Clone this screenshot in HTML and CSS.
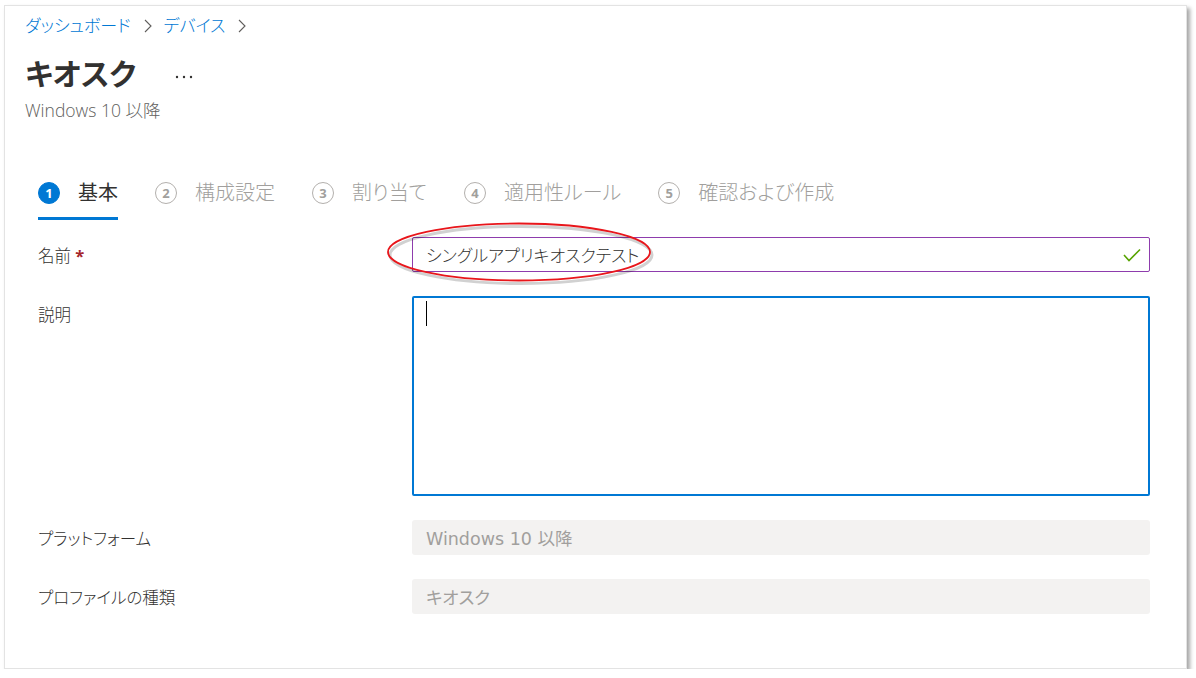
FILE: index.html
```html
<!DOCTYPE html>
<html lang="ja">
<head>
<meta charset="utf-8"/>
<meta content="width=device-width, initial-scale=1.0" name="viewport"/>
<title>キオスク - デバイス</title>
<link rel="stylesheet" href="styles.css">
</head>
<body>
<div class="panel">
<!-- Cabecera -->
<div class="breadcrumb">
  <a href="#">ダッシュボード</a>
  <svg class="chevron" width="8" height="14" viewBox="0 0 8 14"><polyline points="1,1 7,7 1,13" fill="none" stroke="#605e5c" stroke-width="1.1"/></svg>
  <a href="#">デバイス</a>
  <svg class="chevron" width="8" height="14" viewBox="0 0 8 14"><polyline points="1,1 7,7 1,13" fill="none" stroke="#605e5c" stroke-width="1.1"/></svg>
</div>
<div class="title-row">
  <h1>キオスク</h1>
  <svg class="more" width="18" height="4" viewBox="0 0 18 4"><circle cx="2" cy="2" r="1.2" fill="#323130"/><circle cx="9" cy="2" r="1.2" fill="#323130"/><circle cx="16" cy="2" r="1.2" fill="#323130"/></svg>
</div>
<p class="subtitle">Windows 10 以降</p>

<!-- Pasos -->
<div class="tabs">
  <div class="tab active"><span class="step">1</span><span class="tab-label">基本</span></div>
  <div class="tab"><span class="step">2</span><span class="tab-label">構成設定</span></div>
  <div class="tab"><span class="step">3</span><span class="tab-label">割り当て</span></div>
  <div class="tab"><span class="step">4</span><span class="tab-label">適用性ルール</span></div>
  <div class="tab"><span class="step">5</span><span class="tab-label">確認および作成</span></div>
</div>

<!-- Formulario -->
<div class="form">
  <div class="row">
    <label class="label">名前 <span class="req">*</span></label>
    <div class="field field-ok">
      <span class="value">シングルアプリキオスクテスト</span>
      <svg class="check" width="18" height="14" viewBox="0 0 18 14"><polyline points="1,7 6,12.5 17,1.5" fill="none" stroke="#57a300" stroke-width="1.6"/></svg>
    </div>
    <svg class="mark" width="274" height="66" viewBox="0 0 274 66">
      <ellipse cx="135" cy="31" rx="131" ry="28.5" fill="none" stroke="#000" stroke-opacity="0.18" stroke-width="3" transform="translate(2,3)"/>
      <ellipse cx="135" cy="31" rx="131" ry="28.5" fill="none" stroke="#e8161b" stroke-width="1.8"/>
    </svg>
  </div>
  <div class="row">
    <label class="label">説明</label>
    <div class="field textarea"><span class="caret"></span></div>
  </div>
  <div class="row">
    <label class="label">プラットフォーム</label>
    <div class="field disabled">Windows 10 以降</div>
  </div>
  <div class="row">
    <label class="label">プロファイルの種類</label>
    <div class="field disabled">キオスク</div>
  </div>
</div>
</div>
</body>
</html>
```
FILE: styles.css
```css
:root {
  --azul: #0078d4;
  --texto: #323130;
  --gris: #a19f9d;
  --fondo-campo: #f3f2f1;
}

* {
  box-sizing: border-box;
  font-family: "Open Sans", "Noto Sans CJK JP", sans-serif;
  font-feature-settings: "palt";
}

body {
  margin: 0;
  background: #fff;
  color: var(--texto);
}

.panel {
  width: 1183px;
  height: 664px;
  margin: 5px 0 0 4px;
  padding: 9px 0 0 20px;
  border: 1px solid #e3e3e3;
  background: #fff;
  box-shadow: 3px 3px 4px rgba(0,0,0,0.35);
}

.breadcrumb {
  font-size: 17px;
  line-height: 22px;
  display: flex;
  align-items: center;
  font-weight: 300;
}

.breadcrumb a {
  color: var(--azul);
  text-decoration: none;
}

.chevron {
  margin: 0 12px 0 13px;
}

.title-row {
  display: flex;
  align-items: center;
  margin-top: 19px;
  height: 36px;
}

h1 {
  margin: 0;
  font-size: 30px;
  font-weight: 700;
  line-height: 36px;
}

.more {
  margin-left: 39px;
  margin-top: 5px;
}

.subtitle {
  margin: 8px 0 0;
  font-size: 17.5px;
  line-height: 20px;
  color: #605e5c;
  font-weight: 300;
}

.tabs {
  display: flex;
  margin: 60px 0 0 13px;
  gap: 37px;
}

.tab {
  display: flex;
  align-items: center;
  height: 40px;
  padding-bottom: 11px;
  border-bottom: 3px solid transparent;
  color: var(--gris);
  font-size: 20px;
}

.tab-label {
  line-height: 26px;
  font-weight: 300;
}

.tab.active .tab-label {
  font-weight: 400;
}

.step {
  width: 22px;
  height: 22px;
  border-radius: 50%;
  border: 1.5px solid #b3b0ad;
  display: flex;
  align-items: center;
  justify-content: center;
  font-size: 13px;
  font-weight: 700;
  margin-right: 18px;
}

.tab.active {
  color: var(--texto);
  border-bottom-color: var(--azul);
}

.tab.active .step {
  background: var(--azul);
  border-color: var(--azul);
  color: #fff;
}

.form {
  margin: 17px 0 0 13px;
  width: 1112px;
  display: flex;
  flex-direction: column;
  gap: 24px;
}

.row {
  display: grid;
  grid-template-columns: 374px 1fr;
  position: relative;
}

.label {
  font-size: 16.5px;
  line-height: 37px;
  height: 35px;
  font-weight: 300;
}

.req {
  color: #a4262c;
  font-weight: 700;
}

.field {
  height: 35px;
  border-radius: 2px;
  padding: 0 14px;
  display: flex;
  align-items: center;
  font-size: 17px;
  font-weight: 300;
}

.field-ok {
  border: 1px solid #8e3cad;
  justify-content: space-between;
  padding-left: 13px;
}

.check {
  margin-right: -6px;
}

.textarea {
  height: 200px;
  border: 2px solid var(--azul);
  align-items: flex-start;
  padding-top: 3px;
  padding-left: 12px;
}

.caret {
  width: 1px;
  height: 25px;
  background: #000;
}

.disabled {
  background: var(--fondo-campo);
  color: var(--gris);
  border-radius: 3px;
  font-family: "DejaVu Sans", "Noto Sans CJK JP", sans-serif;
  font-size: 17.5px;
  font-weight: 400;
}

.mark {
  position: absolute;
  left: 346px;
  top: -16px;
}
```
